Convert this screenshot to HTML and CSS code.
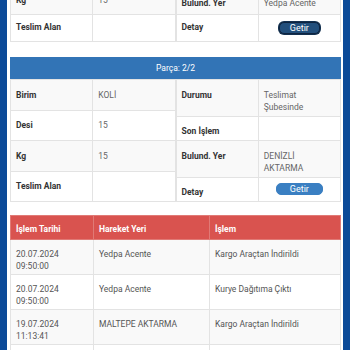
FILE: index.html
```html
<!DOCTYPE html>
<html lang="tr">
<head>
<meta charset="utf-8">
<link rel="stylesheet" href="styles.css">
</head>
<body>
<div class="page">
  <div class="sheet">
    <div class="scrolled">
      <div class="pair">
        <table class="kv prev">
          <tr class="odd"><th>Kg</th><td>15</td></tr>
          <tr><th>Teslim Alan</th><td></td></tr>
        </table>
        <table class="kv prev prev-right">
          <tr class="odd"><th>Bulund. Yer</th><td>Yedpa Acente</td></tr>
          <tr><th>Detay</th><td class="btncell"><button class="btn focused">Getir</button></td></tr>
        </table>
      </div>
    </div>

    <div class="panel">
      <div class="panel-head">Parça: 2/2</div>
      <div class="pair">
        <table class="kv">
          <tr class="odd"><th>Birim</th><td>KOLİ</td></tr>
          <tr><th>Desi</th><td>15</td></tr>
          <tr class="odd"><th>Kg</th><td>15</td></tr>
          <tr><th>Teslim Alan</th><td></td></tr>
        </table>
        <table class="kv">
          <tr class="odd"><th>Durumu</th><td>Teslimat Şubesinde</td></tr>
          <tr><th>Son İşlem</th><td></td></tr>
          <tr class="odd"><th>Bulund. Yer</th><td>DENİZLİ AKTARMA</td></tr>
          <tr><th>Detay</th><td class="btncell"><button class="btn">Getir</button></td></tr>
        </table>
      </div>
    </div>

    <table class="history">
      <thead>
        <tr><th class="c1">İşlem Tarihi</th><th class="c2">Hareket Yeri</th><th>İşlem</th></tr>
      </thead>
      <tbody>
        <tr class="odd"><td>20.07.2024<br>09:50:00</td><td>Yedpa Acente</td><td>Kargo Araçtan İndirildi</td></tr>
        <tr><td>20.07.2024<br>09:50:00</td><td>Yedpa Acente</td><td>Kurye Dağıtıma Çıktı</td></tr>
        <tr class="odd"><td>19.07.2024<br>11:13:41</td><td>MALTEPE AKTARMA</td><td>Kargo Araçtan İndirildi</td></tr>
        <tr><td>19.07.2024<br>11:13:41</td><td>MALTEPE AKTARMA</td><td>Kargo Araca Yüklendi</td></tr>
      </tbody>
    </table>
  </div>
</div>
</body>
</html>
```

FILE: styles.css
```css
html, body {
  margin: 0;
  padding: 0;
  background: #0b4a98;
  height: 100%;
  overflow: hidden;
}
body {
  font-family: Roboto, "Noto Sans", sans-serif;
  font-size: 8.5px;
  line-height: 12px;
  color: #555;
}
.page {
  padding: 0 7px;
}
.sheet {
  background: #fff;
  padding: 0 2px 0 3px;
  min-height: 400px;
}
.scrolled {
  margin-top: -13px;
}
.pair {
  display: flex;
  align-items: stretch;
}
table {
  border-collapse: collapse;
}
.kv {
  flex: 1 1 0;
  width: 50%;
  table-layout: fixed;
}
.kv th, .kv td {
  border: 1px solid #e3e3e3;
  padding: 8.5px 5px 3px;
  text-align: left;
  vertical-align: top;
  width: 50%;
}
.kv.prev th, .kv.prev td {
  padding: 6px 5px 8px;
}
.kv.prev-right .odd th, .kv.prev-right .odd td {
  padding: 9px 5px 5px;
}
.kv th {
  color: #333;
  font-weight: 700;
}
.kv td {
  color: #666;
}
.odd {
  background: #f9f9f9;
}
.kv td.btncell, .kv.prev td.btncell {
  text-align: center;
  vertical-align: middle;
  padding: 0 5px;
}
.btn {
  font-family: Roboto, "Noto Sans", sans-serif;
  font-size: 9px;
  line-height: 10px;
  color: #fff;
  background: #3a7fc2;
  border: 1px solid #3a7fc2;
  border-radius: 5px;
  width: 47px;
  height: 12px;
  padding: 0;
  display: inline-block;
}
.btn.focused {
  background: #224f7c;
  border-color: #0e2440;
  box-shadow: 0 0 0 1px #13304f;
  width: 41px;
}
.panel {
  margin-top: 15px;
}
.panel-head {
  background: #3274b6;
  color: #fff;
  text-align: center;
  font-size: 8.5px;
  line-height: 12px;
  padding: 5px 0;
}
.history {
  width: 100%;
  margin-top: 13px;
}
.history th, .history td {
  border: 1px solid #e3e3e3;
  padding: 7.5px 5px 2.5px;
  text-align: left;
  vertical-align: top;
}
.history thead th {
  background: #d9534f;
  color: #fff;
  font-weight: 700;
  border-color: #e07a76;
  padding: 6.5px 5px 4.5px;
}
.history .c1 { width: 72px; }
.history .c2 { width: 105px; }
.history td {
  color: #555;
}
```
